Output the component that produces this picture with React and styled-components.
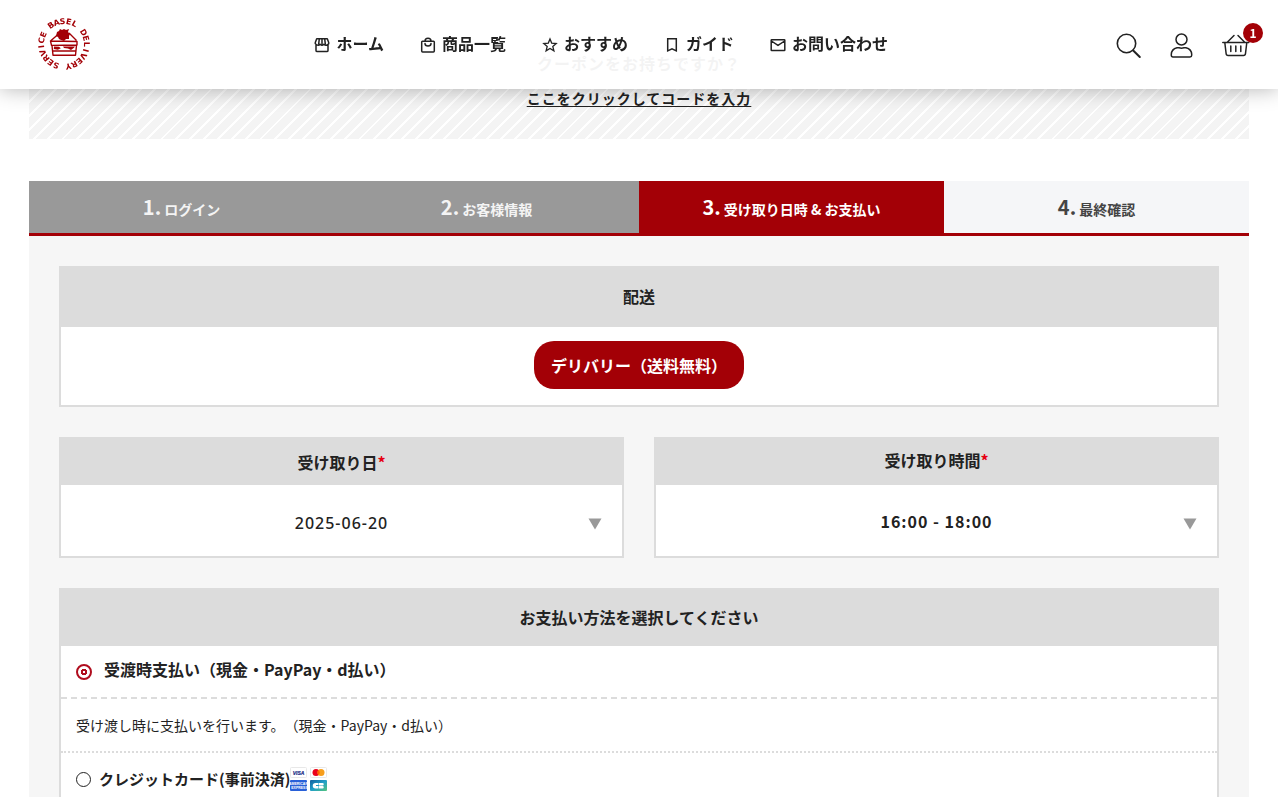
import React from "react";
import styled, { createGlobalStyle } from "styled-components";

const red = "#a30006";
const line = "#dcdcdc";

const Global = createGlobalStyle`
  *, *::before, *::after { box-sizing: border-box; }
  html { overflow: hidden; }
  body {
    margin: 0;
    background: #fff;
    color: #222;
    font-family: "Noto Sans CJK JP", sans-serif;
    font-size: 16px;
    line-height: 24px;
    font-weight: 700;
    text-spacing-trim: space-all;
  }
  button, input, select { font: inherit; color: inherit; }
`;

const Header = styled.header`
  position: fixed;
  z-index: 10;
  top: 0;
  left: 0;
  right: 0;
  height: 89px;
  display: grid;
  grid-template-columns: 10fr auto 13fr;
  align-items: center;
  padding: 0 28px 2px 36px;
  background: rgba(255, 255, 255, 0.95);
  box-shadow: 0 0 20px rgba(0, 0, 0, 0.3);
`;

const LogoLink = styled.a`
  display: flex;
  width: 56px;
  color: ${red};
`;

const Nav = styled.nav`
  display: flex;
  gap: 36px;
`;

const NavLink = styled.a`
  display: flex;
  align-items: center;
  gap: 6px;
  padding-bottom: 2px;
  color: inherit;
  text-decoration: none;
  white-space: nowrap;
  svg { margin-top: 4px; }
`;

const Actions = styled.div`
  display: flex;
  justify-content: flex-end;
  align-items: center;
  gap: 26px;
  padding-top: 4px;
`;

const IconButton = styled.button`
  position: relative;
  display: flex;
  padding: 0;
  border: 0;
  background: none;
  cursor: pointer;
`;

const Badge = styled.span`
  position: absolute;
  top: -9px;
  right: -13px;
  width: 20px;
  height: 20px;
  border-radius: 50%;
  background: ${red};
  color: #fff;
  font-size: 12px;
  line-height: 20px;
  text-align: center;
`;

const Page = styled.main`
  height: 100vh;
  overflow: hidden;
  padding: 24px 29px 0;
`;

const Coupon = styled.section`
  display: flex;
  flex-direction: column;
  align-items: center;
  gap: 11px;
  padding: 27px 0;
  height: 115px;
  margin-bottom: 42px;
  background: repeating-linear-gradient(-45deg, #f4f4f4 0 8px, #fff 8px 10px);
  letter-spacing: 1px;
`;

const CouponTitle = styled.p`
  margin: 0;
`;

const CouponLink = styled.a`
  color: inherit;
  font-size: 14px;
  text-underline-offset: 2px;
`;

const Steps = styled.ol`
  display: grid;
  grid-template-columns: repeat(4, 1fr);
  margin: 0;
  padding: 0;
  list-style: none;
  border-bottom: 3px solid ${red};
`;

const stepColors = {
  done: "background: #999; color: #f4f4f4;",
  current: `background: ${red}; color: #fff;`,
  next: "background: #f5f6f8; color: #444;",
};

const Step = styled.li`
  display: flex;
  justify-content: center;
  align-items: baseline;
  gap: 3px;
  height: 52px;
  font-size: 14px;
  line-height: 52px;
  ${(p) => stepColors[p.$state]}
`;

const StepNumber = styled.span`
  font-size: 20px;
`;

const Form = styled.form`
  display: flex;
  flex-direction: column;
  gap: 30px;
  padding: 30px;
  background: #f6f6f6;
`;

const Columns = styled.div`
  display: grid;
  grid-template-columns: 1fr 1fr;
  gap: 30px;
`;

const Panel = styled.section`
  border: 2px solid ${line};
  border-top: 0;
  background: #fff;
`;

const PanelTitle = styled.h2`
  margin: 0 -2px;
  padding: ${(p) => p.$pad};
  background: ${line};
  font-size: 16px;
  line-height: 24px;
  text-align: center;
`;

const FieldTitle = styled(PanelTitle).attrs({ as: "label" })`
  display: block;
`;

const Required = styled.abbr`
  color: #e60012;
  text-decoration: none;
  line-height: 0;
`;

const PanelBody = styled.div`
  display: flex;
  justify-content: center;
  padding: 14px 14px 16px;
`;

const DeliveryButton = styled.button`
  height: 48px;
  padding: 0 17px;
  border: 0;
  border-radius: 20px;
  background: ${red};
  color: #fff;
  text-spacing-trim: space-all;
`;

const Field = styled.div`
  position: relative;
`;

const Select = styled.select`
  display: block;
  appearance: none;
  width: 100%;
  height: 71px;
  padding: 0;
  border: 0;
  border-radius: 0;
  background: transparent;
  ${(p) => p.$date && `font-family: "Noto Sans", sans-serif; font-weight: 500; padding-top: 4px;`}
  letter-spacing: 1px;
  text-align: center;
  text-align-last: center;
`;

const Arrow = styled.svg`
  position: absolute;
  right: 20px;
  top: 33px;
  pointer-events: none;
`;

const PayRow = styled.label`
  display: flex;
  align-items: center;
  gap: ${(p) => (p.$checked ? "12px" : "8px")};
  height: ${(p) => (p.$checked ? "51px" : "52px")};
  padding: ${(p) => (p.$checked ? "0 15px 6px" : "0 15px")};
  font-size: ${(p) => (p.$checked ? "16px" : "15px")};
`;

const Radio = styled.input`
  appearance: none;
  flex: none;
  width: 15px;
  height: 15px;
  margin: 0;
  border: 1px solid #222;
  border-radius: 50%;
  &:checked {
    width: 16px;
    height: 16px;
    margin-top: 6px;
    border: 2px solid #b00d1e;
    background: radial-gradient(circle, #fff 0 1px, #b00d1e 1px 3px, #fff 3px);
  }
`;

const PayNote = styled.p`
  margin: 0;
  padding: 14px 15px;
  border-top: 2px dashed ${line};
  border-bottom: 2px dotted ${line};
  font-size: 14px;
  font-weight: 400;
`;

const CardName = styled.span`
  display: flex;
  align-items: center;
`;

const NavGlyph = ({ children }) => (
  <svg width="16" height="16" viewBox="0 0 16 16" fill="none" stroke="#222" strokeWidth="1.5" strokeLinejoin="round" strokeLinecap="round" aria-hidden="true">
    {children}
  </svg>
);

const glyphs = {
  home: <path d="M2.700 1.800h10.600l1.400 3.800v1.100q-1.200 1.600-3 1.600-1.400 0-1.800-1-1 1-1.900 1t-1.900-1q-.8 1-1.900 1-1.800 0-2.900-1.600V5.600zM5.300 1.800l-.6 5M8 1.800v5M10.700 1.800l.6 5M2 8.200v5.200q0 1.200 1.200 1.200h9.600q1.200 0 1.200-1.200V8.200" />,
  bag: <path d="M2.500 4.300h11q.8 0 .8.8v9q0 .9-.9.9H2.600q-.9 0-.9-.9v-9q0-.8.8-.8zM5 4.200c0-4 6-4 6 0M5 6.500c0 3.400 6 3.400 6 0" />,
  star: <path strokeWidth="1.3" strokeLinejoin="miter" d="M8 2l1.700 4.100 4.500.4-3.400 2.900 1.100 4.400L8 11.400l-3.900 2.400 1.100-4.400-3.400-2.900 4.500-.4z" />,
  bookmark: <path strokeLinejoin="miter" d="M3.700 1.800h8.600v12.100L8 11.900l-4.300 2z" />,
  mail: <path d="M1.700 2.700h12.600q.5 0 .5.5v9.900q0 .5-.5.5H1.700q-.5 0-.5-.5V3.200q0-.5.5-.5zM1.400 4l6.600 4.400L14.600 4" />,
};

const navItems = [
  ["home", "ホーム"],
  ["bag", "商品一覧"],
  ["star", "おすすめ"],
  ["bookmark", "ガイド"],
  ["mail", "お問い合わせ"],
];

const Logo = () => (
  <svg width="56" height="56" viewBox="0 0 56 56" role="img" aria-label="Basel Delivery Service">
    <g fill="currentColor" fontFamily="DejaVu Sans" fontWeight="700" fontSize="8" textAnchor="middle">
      {"BASEL DELIVERY SERVICE".split("").map((c, i) => (
        <text key={i} x="28" y="8" transform={`rotate(${-35 + i * 15.7} 28 28)`}>{c}</text>
      ))}
    </g>
    <path fill="currentColor" d="M21 16l2-1 1-2 2 1 2-1 2 1 3-1-1 3 2 2-1 2 0 3-3 0-2 2-3-1-2-1-1-2-2-1z" />
    <path fill="none" stroke="currentColor" strokeWidth="1.400" strokeLinejoin="round" d="M14.500 25l8-7M33 17l7.500 7.500M14.500 25l26.500.5v3.500l-25.500.4-1-4.400zM16 29.500l1 9.800h22.500l1-10M17 35h23" />
    <path fill="currentColor" d="M18 30.500l5 .3 1.800 1.400-3 1.600-4-.7zM27 30.500h12l-1 1.300-3 2.200-3-1.500-4-.5z" />
  </svg>
);

const Cards = () => (
  <svg width="37" height="24" viewBox="0 0 37 24" role="img" aria-label="VISA, Mastercard, American Express, CB">
    <rect x=".5" y=".5" width="16" height="10" rx="1" fill="#fff" stroke="#e8e8e8" />
    <text x="8.5" y="7.6" fontFamily="Liberation Sans" fontStyle="italic" fontWeight="700" fontSize="5" textAnchor="middle" fill="#172b85" stroke="#172b85" strokeWidth=".2">VISA</text>
    <rect x="20.5" y=".5" width="16" height="10" rx="1" fill="#fff" stroke="#e8e8e8" />
    <circle cx="26" cy="5.500" r="3.500" fill="#eb001b" />
    <circle cx="31" cy="5.500" r="3.500" fill="#f79e1b" />
    <path d="M28.500 3a3.500 3.500 0 0 1 0 5 3.500 3.500 0 0 1 0-5z" fill="#ff5f00" />
    <rect y="13" width="17" height="11" rx="1" fill="#2860d8" />
    <text x="8.500" y="18" fontFamily="Liberation Sans" fontWeight="700" fontSize="3.500" textAnchor="middle" fill="#fff">AMERICAN</text>
    <text x="9.500" y="21.500" fontFamily="Liberation Sans" fontWeight="700" fontSize="3.500" textAnchor="middle" fill="#fff">EXPRESS</text>
    <defs>
      <linearGradient id="cb" x1="0" x2="1" y1="0" y2="1">
        <stop stopColor="#145f9e" />
        <stop offset=".5" stopColor="#219fc9" />
        <stop offset="1" stopColor="#55c47c" />
      </linearGradient>
    </defs>
    <rect x="20" y="13" width="17" height="11" rx="1" fill="url(#cb)" />
    <path fill="#fff" d="M28.500 16v2h-2.500v1h2.500v2.500h-3a2.700 2.700 0 0 1 0-5.500zM29 16h3.500a1.200 1.200 0 0 1 0 2.500H29zM29 19h3.500a1.200 1.200 0 0 1 0 2.500H29z" />
  </svg>
);

const Down = () => (
  <Arrow width="14" height="12" viewBox="0 0 14 12" aria-hidden="true">
    <path d="M.5.500h13L7 11.500z" fill="#999" />
  </Arrow>
);

export default function App() {
  return (
    <>
      <Global />
      <Header>
        <LogoLink href="#"><Logo /></LogoLink>
        <Nav>
          {navItems.map(([id, text]) => (
            <NavLink href="#" key={id}><NavGlyph>{glyphs[id]}</NavGlyph>{text}</NavLink>
          ))}
        </Nav>
        <Actions>
          <IconButton aria-label="検索">
            <svg width="28" height="28" viewBox="0 0 28 28" fill="none" stroke="#222" strokeWidth="1.600" strokeLinecap="round">
              <circle cx="12.500" cy="11.500" r="9.200" /><path d="M19.200 18.500l6.600 6.500" strokeWidth="2" />
            </svg>
          </IconButton>
          <IconButton aria-label="アカウント">
            <svg width="28" height="28" viewBox="0 0 28 28" fill="none" stroke="#222" strokeWidth="1.500">
              <circle cx="13.500" cy="7.500" r="5.500" />
              <path d="M9 15.800h2q2.500.800 5 0h2q5.500 1.500 5.700 6.500v1q0 1.700-1.700 1.700h-17q-1.700 0-1.700-1.700v-1q.2-5 5.700-6.500z" />
            </svg>
          </IconButton>
          <IconButton aria-label="カート">
            <svg width="28" height="28" viewBox="0 0 28 28" fill="none" stroke="#222" strokeWidth="1.500" strokeLinecap="round">
              <path d="M.8 10.500h26M5.500 10L12 3.500M16 3.500L22.500 10M2.800 10.500l1.300 11q.2 2 2 2h15.400q1.800 0 2-2l1.300-11M8.800 14v5.500M13.800 14v5.500M18.800 14v5.500" />
            </svg>
            <Badge>1</Badge>
          </IconButton>
        </Actions>
      </Header>
      <Page>
        <Coupon>
          <CouponTitle>クーポンをお持ちですか？</CouponTitle>
          <CouponLink href="#">ここをクリックしてコードを入力</CouponLink>
        </Coupon>
        <Steps>
          <Step $state="done"><StepNumber>1.</StepNumber>ログイン</Step>
          <Step $state="done"><StepNumber>2.</StepNumber>お客様情報</Step>
          <Step $state="current"><StepNumber>3.</StepNumber>受け取り日時 &amp; お支払い</Step>
          <Step $state="next"><StepNumber>4.</StepNumber>最終確認</Step>
        </Steps>
        <Form>
          <Panel>
            <PanelTitle $pad="18px 0 19px">配送</PanelTitle>
            <PanelBody><DeliveryButton type="button">デリバリー（送料無料）</DeliveryButton></PanelBody>
          </Panel>
          <Columns>
            <Panel>
              <FieldTitle htmlFor="date" $pad="13px 0 11px">受け取り日<Required>*</Required></FieldTitle>
              <Field>
                <Select id="date" $date><option>2025-06-20</option></Select>
                <Down />
              </Field>
            </Panel>
            <Panel>
              <FieldTitle htmlFor="time" $pad="11px 0 13px">受け取り時間<Required>*</Required></FieldTitle>
              <Field>
                <Select id="time"><option>16:00 - 18:00</option></Select>
                <Down />
              </Field>
            </Panel>
          </Columns>
          <Panel>
            <PanelTitle $pad="17px 0">お支払い方法を選択してください</PanelTitle>
            <PayRow $checked><Radio type="radio" name="pay" defaultChecked />受渡時支払い（現金・PayPay・d払い）</PayRow>
            <PayNote>受け渡し時に支払いを行います。（現金・PayPay・d払い）</PayNote>
            <PayRow><Radio type="radio" name="pay" /><CardName>クレジットカード(事前決済)<Cards /></CardName></PayRow>
          </Panel>
        </Form>
      </Page>
    </>
  );
}
